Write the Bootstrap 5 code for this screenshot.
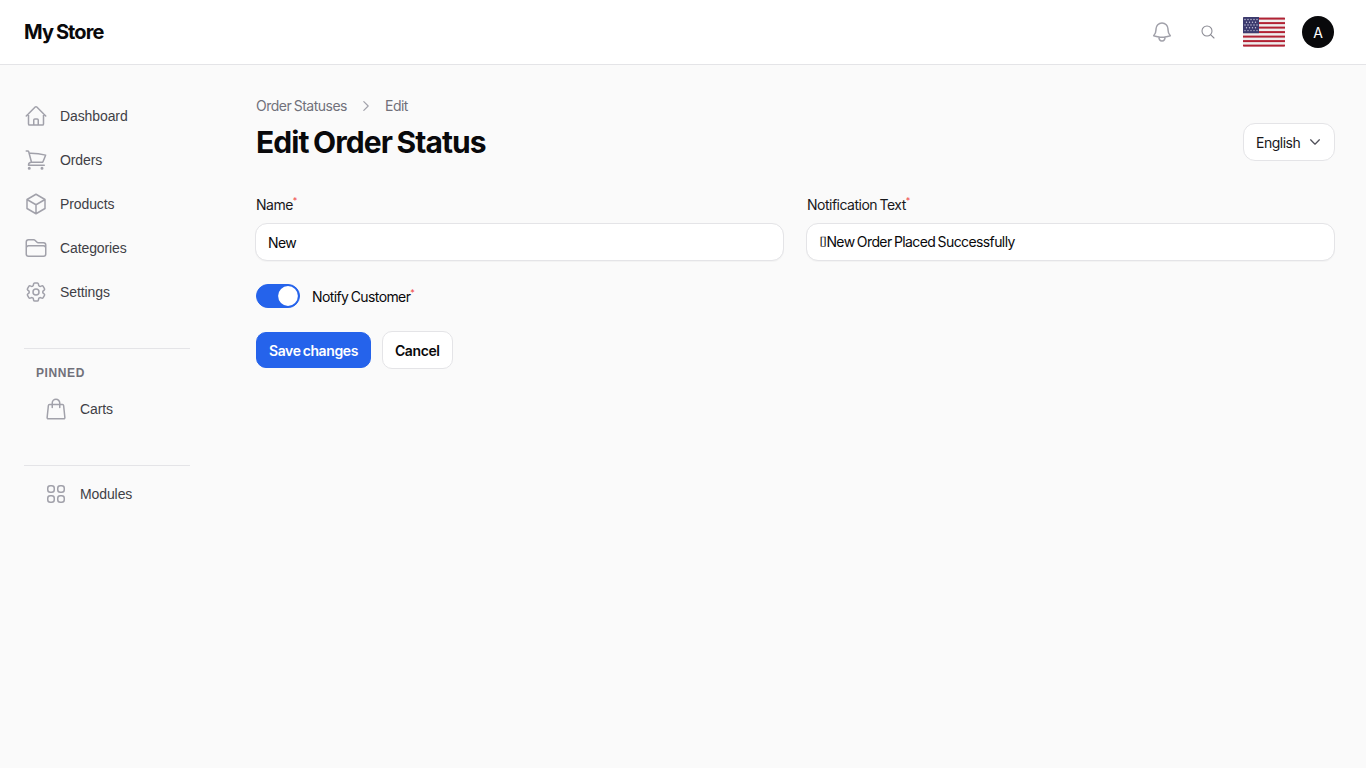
<!DOCTYPE html>
<html lang="en">
<head>
    <meta charset="UTF-8">
    <meta name="viewport" content="width=device-width, initial-scale=1.0">
    <title>Edit Order Status</title>
    <link href="https://cdn.jsdelivr.net/npm/bootstrap@5.3.0/dist/css/bootstrap.min.css" rel="stylesheet">
    <script src="https://cdn.jsdelivr.net/npm/bootstrap@5.3.0/dist/js/bootstrap.bundle.min.js"></script>
    <style>
        body { background: #fafafa; font-family: Inter, "Liberation Sans", sans-serif; font-size: 14px; color: #09090b; min-height: 100vh; letter-spacing: -0.5px; word-spacing: -1px; }
        .top-bar { height: 65px; background: #fff; border-bottom: 1px solid #e4e4e7; padding: 0 32px 0 24px; }
        .brand-name { font-size: 20px; font-weight: 700; letter-spacing: -0.9px; word-spacing: -1px; color: #09090b; }
        .top-ico { color: #a1a1aa; display: block; }
        .search-ico { color: #8a8a93; }
        .flag-ico { display: block; width: 42px; height: 30px; border-radius: 1px; }
        .avatar-dot { width: 32px; height: 32px; border-radius: 50%; background: #09090b; color: #fff; font-size: 14px; letter-spacing: 0; }
        .side-col { width: 166px; flex: none; margin-left: 24px; padding-top: 29px; font-family: "Liberation Sans", Arial, sans-serif; letter-spacing: -0.1px; word-spacing: 0; }
        .side-link { height: 44px; color: #3f3f46; text-decoration: none; gap: 12px; }
        .side-link svg { width: 24px; height: 24px; color: #a1a1aa; flex: none; }
        .side-inner { padding-left: 20px; }
        .side-rule { border-top: 1px solid #e4e4e7; }
        .pinned-title { font-size: 12px; font-weight: 700; letter-spacing: 0.6px; color: #71717a; padding-left: 12px; line-height: 16px; }
        .main-col { flex: 1; margin-left: 66px; margin-right: 31px; padding-top: 32px; }
        .crumbs { color: #71717a; line-height: 17px; gap: 12px; }
        .page-title { font-size: 30px; font-weight: 700; letter-spacing: -0.95px; word-spacing: -1.5px; line-height: 36px; margin: 2px 0 0; color: #09090b; }
        .lang-btn { width: 92px; height: 38px; background: #fff; border: 1px solid #e4e4e7; border-radius: 12px; color: #18181b; font-size: 14px; padding: 0 12px; letter-spacing: -0.5px; }
        .field-label { font-size: 14px; line-height: 17px; margin-bottom: 10px; padding-left: 1px; color: #18181b; display: block; }
        .req-mark { color: #ef4444; font-size: 9px; vertical-align: super; line-height: 0; }
        .field-input.form-control { height: 38px; border: 1px solid #e4e4e7; border-radius: 12px; font-size: 14px; padding: 0 12px; color: #09090b; box-shadow: 0 1px 1px rgba(0,0,0,.03); letter-spacing: -0.6px; word-spacing: -1px; }
        .form-row { display: grid; grid-template-columns: 1fr 1fr; gap: 22px; margin: 35px 0 0 -1px; }
        .notify-row { margin-top: 22px; height: 26px; gap: 12px; letter-spacing: -0.6px; }
        .notify-row .form-switch { min-height: 0; padding: 0; margin: 0; height: 24px; }
        .notify-row .form-check-input { width: 44px; height: 24px; margin: 0; float: none; display: block; background-color: #2563eb; border-color: #2563eb; background-image: url("data:image/svg+xml,%3csvg xmlns='http://www.w3.org/2000/svg' viewBox='-4 -4 8 8'%3e%3ccircle r='3.6' fill='%23fff'/%3e%3c/svg%3e"); }
        .save-btn { height: 36px; background: #2563eb; border-color: #2563eb; border-radius: 10px; font-size: 14px; font-weight: 600; padding: 0 12px; color: #fff; letter-spacing: -0.4px; word-spacing: -1px; }
        .cancel-btn { height: 38px; background: #fff; border: 1px solid #e4e4e7; border-radius: 10px; font-size: 14px; font-weight: 600; padding: 0 12px; color: #09090b; letter-spacing: -0.4px; }
        .btn-line { margin-top: 22px; gap: 11px; }
    </style>
</head>
<body>
    <header class="top-bar d-flex align-items-center justify-content-between">
        <span class="brand-name">My Store</span>
        <div class="d-flex align-items-center">
            <svg class="top-ico" width="24" height="24" viewBox="0 0 24 24" fill="none" stroke="currentColor" stroke-width="1.5" stroke-linecap="round" stroke-linejoin="round" style="margin-right:26px"><path d="M14.86 17.08a24 24 0 0 0 5.45-1.31A9 9 0 0 1 18 9.75V9A6 6 0 0 0 6 9v.75a9 9 0 0 1-2.31 6.02 24 24 0 0 0 5.45 1.31m5.72 0a24 24 0 0 1-5.72 0m5.72 0a3 3 0 1 1-5.72 0"/></svg>
            <svg class="top-ico search-ico" width="16" height="16" viewBox="0 0 24 24" fill="none" stroke="currentColor" stroke-width="1.6" stroke-linecap="round" style="margin-right:27px"><circle cx="10.5" cy="10.5" r="7.5"/><path d="M21 21l-5.2-5.2"/></svg>
            <svg class="flag-ico" viewBox="0 0 42 30" style="margin-right:17px">
                <rect width="42" height="30" fill="#eee"/>
                <g fill="#b22234">
                    <rect y="0.6" width="42" height="2"/><rect y="5.1" width="42" height="2"/><rect y="9.6" width="42" height="2"/><rect y="14.1" width="42" height="2"/><rect y="18.6" width="42" height="2"/><rect y="23.1" width="42" height="2"/><rect y="27.6" width="42" height="2"/>
                </g>
                <rect width="16" height="16.2" fill="#3c3b6e"/>
                <g fill="#c8c8dc">
                    <circle cx="2" cy="2.5" r=".7"/><circle cx="5" cy="2.5" r=".7"/><circle cx="8" cy="2.5" r=".7"/><circle cx="11" cy="2.5" r=".7"/><circle cx="14" cy="2.5" r=".7"/>
                    <circle cx="3.5" cy="5.2" r=".7"/><circle cx="6.5" cy="5.2" r=".7"/><circle cx="9.5" cy="5.2" r=".7"/><circle cx="12.5" cy="5.2" r=".7"/>
                    <circle cx="2" cy="8" r=".7"/><circle cx="5" cy="8" r=".7"/><circle cx="8" cy="8" r=".7"/><circle cx="11" cy="8" r=".7"/><circle cx="14" cy="8" r=".7"/>
                    <circle cx="3.5" cy="10.8" r=".7"/><circle cx="6.5" cy="10.8" r=".7"/><circle cx="9.5" cy="10.8" r=".7"/><circle cx="12.5" cy="10.8" r=".7"/>
                    <circle cx="2" cy="13.6" r=".7"/><circle cx="5" cy="13.6" r=".7"/><circle cx="8" cy="13.6" r=".7"/><circle cx="11" cy="13.6" r=".7"/><circle cx="14" cy="13.6" r=".7"/>
                </g>
            </svg>
            <div class="avatar-dot d-flex align-items-center justify-content-center">A</div>
        </div>
    </header>
    <div class="d-flex">
        <aside class="side-col">
            <a href="#" class="side-link d-flex align-items-center">
                <svg viewBox="0 0 24 24" fill="none" stroke="currentColor" stroke-width="1.5" stroke-linecap="round" stroke-linejoin="round"><path d="M2.25 12l8.95-8.96a1.13 1.13 0 0 1 1.6 0L21.75 12M4.5 9.75v10.13c0 .62.5 1.12 1.13 1.12H9.75v-4.88c0-.62.5-1.12 1.13-1.12h2.25c.62 0 1.12.5 1.12 1.12V21h4.13c.62 0 1.12-.5 1.12-1.12V9.75M8.25 21h8.25"/></svg>
                Dashboard
            </a>
            <a href="#" class="side-link d-flex align-items-center">
                <svg viewBox="0 0 24 24" fill="none" stroke="currentColor" stroke-width="1.5" stroke-linecap="round" stroke-linejoin="round"><path d="M2.25 3h1.39c.51 0 .95.34 1.09.83l.38 1.44M7.5 14.25a3 3 0 0 0-3 3h15.75m-12.75-3h11.22c1.12-2.3 2.1-4.68 2.92-7.14A60 60 0 0 0 5.11 5.27M7.5 14.25L5.11 5.27M6 20.25a.75.75 0 1 1-1.5 0 .75.75 0 0 1 1.5 0zm12.75 0a.75.75 0 1 1-1.5 0 .75.75 0 0 1 1.5 0z"/></svg>
                Orders
            </a>
            <a href="#" class="side-link d-flex align-items-center">
                <svg viewBox="0 0 24 24" fill="none" stroke="currentColor" stroke-width="1.5" stroke-linecap="round" stroke-linejoin="round"><path d="M21 7.5l-9-5.25L3 7.5m18 0l-9 5.25m9-5.25v9l-9 5.25M3 7.5l9 5.25M3 7.5v9l9 5.25m0-9v9"/></svg>
                Products
            </a>
            <a href="#" class="side-link d-flex align-items-center">
                <svg viewBox="0 0 24 24" fill="none" stroke="currentColor" stroke-width="1.5" stroke-linecap="round" stroke-linejoin="round"><path d="M2.25 12.75V12A2.25 2.25 0 0 1 4.5 9.75h15A2.25 2.25 0 0 1 21.75 12v.75m-8.69-6.44l-2.12-2.12a1.5 1.5 0 0 0-1.06-.44H4.5A2.25 2.25 0 0 0 2.25 6v12a2.25 2.25 0 0 0 2.25 2.25h15A2.25 2.25 0 0 0 21.75 18V9a2.25 2.25 0 0 0-2.25-2.25h-5.38a1.5 1.5 0 0 1-1.06-.44z"/></svg>
                Categories
            </a>
            <a href="#" class="side-link d-flex align-items-center">
                <svg viewBox="0 0 24 24" fill="none" stroke="currentColor" stroke-width="1.5" stroke-linecap="round" stroke-linejoin="round"><path d="M9.59 3.94c.09-.54.56-.94 1.11-.94h2.59c.55 0 1.02.4 1.11.94l.21 1.28c.06.37.31.68.65.87l.24.14c.32.2.72.26 1.08.13l1.22-.46a1.13 1.13 0 0 1 1.37.49l1.3 2.25c.27.48.16 1.08-.26 1.43l-1.01.83c-.29.24-.43.6-.42.98v.28c-.01.37.13.74.42.98l1.01.83c.42.35.53.95.26 1.43l-1.3 2.25a1.13 1.13 0 0 1-1.37.49l-1.22-.46c-.36-.13-.76-.07-1.08.13l-.24.14c-.34.19-.59.5-.65.87l-.21 1.28c-.09.54-.56.94-1.11.94h-2.59c-.55 0-1.02-.4-1.11-.94l-.21-1.28c-.06-.37-.31-.68-.64-.87l-.25-.14c-.32-.2-.72-.26-1.08-.13l-1.22.46a1.13 1.13 0 0 1-1.37-.49l-1.3-2.25a1.13 1.13 0 0 1 .26-1.43l1.01-.83c.29-.24.43-.61.42-.98v-.28c.01-.38-.13-.74-.42-.98l-1.01-.83a1.13 1.13 0 0 1-.26-1.43l1.3-2.25a1.13 1.13 0 0 1 1.37-.49l1.22.46c.36.13.76.07 1.08-.13l.25-.14c.33-.19.58-.5.64-.87l.21-1.28z"/><circle cx="12" cy="12" r="3"/></svg>
                Settings
            </a>
            <div class="side-rule" style="margin-top:34px"></div>
            <div class="pinned-title" style="margin-top:16px">PINNED</div>
            <a href="#" class="side-link side-inner d-flex align-items-center" style="margin-top:6px">
                <svg viewBox="0 0 24 24" fill="none" stroke="currentColor" stroke-width="1.5" stroke-linecap="round" stroke-linejoin="round"><path d="M15.75 10.5V6a3.75 3.75 0 1 0-7.5 0v4.5m11.36-1.99l1.26 12A1.13 1.13 0 0 1 19.75 21.75H4.25a1.13 1.13 0 0 1-1.12-1.24l1.26-12A1.13 1.13 0 0 1 5.51 7.5h12.98c.58 0 1.06.44 1.12 1.01z"/></svg>
                Carts
            </a>
            <div class="side-rule" style="margin-top:34px"></div>
            <a href="#" class="side-link side-inner d-flex align-items-center" style="margin-top:6px">
                <svg viewBox="0 0 24 24" fill="none" stroke="currentColor" stroke-width="1.5" stroke-linecap="round" stroke-linejoin="round"><rect x="3.75" y="3.75" width="6.5" height="6.5" rx="2.5"/><rect x="13.75" y="3.75" width="6.5" height="6.5" rx="2.5"/><rect x="3.75" y="13.75" width="6.5" height="6.5" rx="2.5"/><rect x="13.75" y="13.75" width="6.5" height="6.5" rx="2.5"/></svg>
                Modules
            </a>
        </aside>
        <main class="main-col">
            <div class="crumbs d-flex align-items-center">
                <span>Order Statuses</span>
                <svg width="14" height="14" viewBox="0 0 24 24" fill="none" stroke="#a1a1aa" stroke-width="2" stroke-linecap="round" stroke-linejoin="round"><path d="M8.25 4.5l7.5 7.5-7.5 7.5"/></svg>
                <span>Edit</span>
            </div>
            <div class="d-flex justify-content-between align-items-start" style="margin-top:8px">
                <h1 class="page-title">Edit Order Status</h1>
                <button type="button" class="lang-btn d-flex align-items-center justify-content-between" style="margin-top:1px">English
                    <svg width="14" height="14" viewBox="0 0 24 24" fill="none" stroke="#52525b" stroke-width="2.2" stroke-linecap="round" stroke-linejoin="round"><path d="M4.5 8.25l7.5 7.5 7.5-7.5"/></svg>
                </button>
            </div>
            <div class="form-row">
                <div>
                    <label class="field-label" for="name">Name<span class="req-mark">*</span></label>
                    <input class="form-control field-input" id="name" type="text" value="New">
                </div>
                <div>
                    <label class="field-label" for="notif">Notification Text<span class="req-mark">*</span></label>
                    <input class="form-control field-input" id="notif" type="text" value="&#x2337;New Order Placed Successfully">
                </div>
            </div>
            <div class="notify-row d-flex align-items-center">
                <div class="form-check form-switch">
                    <input class="form-check-input" type="checkbox" role="switch" id="notify" checked>
                </div>
                <label for="notify">Notify Customer<span class="req-mark">*</span></label>
            </div>
            <div class="btn-line d-flex align-items-center">
                <button type="button" class="btn save-btn">Save changes</button>
                <button type="button" class="btn cancel-btn">Cancel</button>
            </div>
        </main>
    </div>
</body>
</html>
